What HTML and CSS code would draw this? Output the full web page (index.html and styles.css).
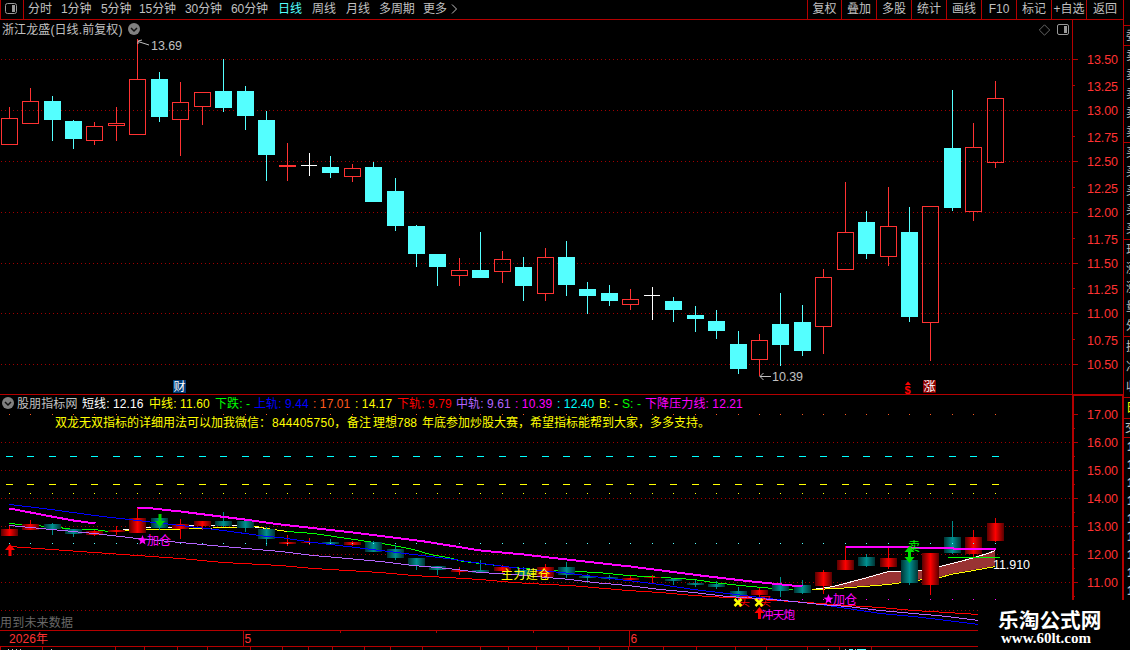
FILE: index.html
```html
<!DOCTYPE html>
<html lang="zh-CN">
<head>
<meta charset="utf-8">
<title>浙江龙盛 日线</title>
<link rel="stylesheet" href="styles.css">
</head>
<body>
<div class="terminal">
  <main class="workspace">
    <nav class="toolbar">
      <div class="panel-toggle"><svg width="15" height="14" viewBox="0 0 15 14"><rect x="1.5" y="1.5" width="11" height="10" rx="2" fill="none" stroke="#999"/><rect x="8" y="3" width="3" height="7" fill="#999"/></svg></div>
      <div class="periods">
        <span>分时</span><span>1分钟</span><span>5分钟</span><span>15分钟</span><span>30分钟</span><span>60分钟</span><span class="active">日线</span><span>周线</span><span>月线</span><span>多周期</span><span>更多</span><svg width="8" height="12" viewBox="0 0 8 12"><path d="M1 1.500L5.500 6L1 10.500" fill="none" stroke="#c0c0c0"/></svg>
      </div>
      <div class="tools"><span>复权</span><span>叠加</span><span>多股</span><span>统计</span><span>画线</span><span>F10</span><span>标记</span><span>+自选</span><span>返回</span></div>
    </nav>
    <section class="panel price-panel">
      <svg class="canvas" id="price" viewBox="0 20 1123 374"></svg>
      <header class="price-head">
        <span class="stock">浙江龙盛(日线.前复权)</span>
        <svg class="chev" width="12" height="12" viewBox="0 0 12 12"><circle cx="6" cy="6" r="6" fill="#808080"/><path d="M3 5L6 8L9 5" fill="none" stroke="#111" stroke-width="1.500"/></svg>
        <svg class="corner" width="31" height="12" viewBox="0 0 31 12"><path d="M5.500 .8L10.700 6L5.500 11.200L.3 6Z" fill="none" stroke="#808080" stroke-width=".8"/><rect x="18.500" y=".5" width="11" height="10" rx="1.500" fill="none" stroke="#999"/><rect x="25" y="2" width="3" height="7" fill="#999"/></svg>
      </header>
    </section>
    <section class="panel signal-panel">
      <svg class="canvas" id="signal" viewBox="0 394 1123 236"></svg>
      <div class="signal-head">
        <div class="values">
          <svg width="12" height="12" viewBox="0 0 12 12"><circle cx="6" cy="6" r="6" fill="#808080"/><path d="M3 5L6 8L9 5" fill="none" stroke="#111" stroke-width="1.500"/></svg>
          <span class="silver">股朋指标网</span><span class="white">短线: 12.16</span><span class="yellow">中线: 11.60</span><span class="green">下跌: -</span><span class="blue">上轨: 9.44</span><span class="orange">: 17.01</span><span class="yellow">: 14.17</span><span class="red">下轨: 9.79</span><span class="violet">中轨: 9.61</span><span class="magenta">: 10.39</span><span class="cyan">: 12.40</span><span class="yellow">B: -</span><span class="green">S: -</span><span class="magenta">下降压力线: 12.21</span>
        </div>
        <p class="notice"><span>双龙无双指标的详细用法可以加我微信：</span><span class="qq">844405750，</span><span>备注</span><span>理想788</span><span>年底参加炒股大赛，希望指标能帮到大家，多多支持。</span></p>
      </div>
    </section>
    <footer class="timeline"><svg id="dates" width="978" height="20" viewBox="0 630 978 20"></svg></footer>
  </main>
  <aside class="quotes">
    <div class="q q1"><i>委</i></div>
    <div class="q q5"><i>卖</i><i>卖</i><i>卖</i><i>卖</i><i>卖</i></div>
    <div class="q q5"><i>买</i><i>买</i><i>买</i><i>买</i><i>买</i></div>
    <div class="q q5"><i>现</i><i>涨</i><i>涨</i><i>量</i><i>外</i></div>
    <div class="q q3"><i>换</i><i>净</i><i>收</i></div>
    <div class="q qy"><i>日</i></div>
    <div class="q qt"><i>交</i></div>
    <div class="q ticks"><i>1</i><i>1</i><i>1</i><i>1</i><i>1</i><i>1</i><i>1</i><i>1</i><i>1</i></div>
  </aside>
  <div class="watermark"><strong>乐淘公式网</strong><b>www.60lt.com</b></div>
</div>
<script src="chart.js"></script>
</body>
</html>
```
FILE: styles.css
```css
* { box-sizing: border-box; }
body { margin: 0; background: #000; color: #c0c0c0; font-family: "Liberation Sans", "Noto Sans CJK SC", sans-serif; font-size: 12px; line-height: 14px; overflow: hidden; }
.terminal { position: relative; display: flex; width: 1130px; height: 650px; overflow: hidden; }
.workspace { display: grid; grid-template-rows: 20px 374px 236px 20px; width: 1123px; flex: none; }
.toolbar { display: flex; height: 20px; border-bottom: 1px solid #b40000; border-left: 1px solid #b40000; white-space: nowrap; }
.panel-toggle { width: 23px; padding: 2px 0 0 3px; border-right: 1px solid #b40000; }
.periods { display: grid; grid-template-columns: 33px 40px 38px 46px 46px 47px 34px 34px 33px 44px 28px 10px; padding: 2px 0 0 4px; letter-spacing: -.1px; }
.periods svg { margin-top: 1px; }
.active { color: #54ffff; }
.tools { display: grid; grid-template-columns: 34px repeat(7, 35px) 37px; margin-left: auto; }
.tools span { border-left: 1px solid #b40000; padding-top: 2px; text-align: center; }
.panel { display: grid; min-height: 0; }
.canvas, .price-head, .signal-head { grid-area: 1 / 1; }
.canvas { display: block; width: 1123px; height: 100%; }
.canvas text, .timeline text { font-family: "Liberation Sans", "Noto Sans CJK SC", sans-serif; }
.price-head { display: flex; align-self: start; padding: 3px 53px 0 2px; }
.stock { width: 126px; white-space: nowrap; letter-spacing: .1px; }
.corner { margin: 1px 0 0 auto; }
.signal-head { align-self: start; padding: 3px 0 0 2px; white-space: nowrap; }
.values { display: grid; grid-template-columns: 15px 65px 67px 66px 39px 59px 42px 42px 59px 59px 42px 42px 23px 23px 110px; letter-spacing: .1px; }
.silver { color: #c0c0c0; }
.white { color: #fff; }
.yellow { color: #ff0; }
.green { color: #0f0; }
.blue { color: #00f; }
.orange { color: #ff5a1e; }
.red { color: #f00; }
.violet { color: #b464ff; }
.magenta { color: #f0f; }
.cyan { color: #0ff; }
.notice { display: grid; grid-template-columns: 217px 75px 26px 49px 300px; margin: 5px 0 0 53px; color: #ff0; }
.qq { letter-spacing: .25px; }
.timeline svg { display: block; }
.quotes { width: 7px; height: 600px; padding-top: 25px; overflow: hidden; flex: none; border-left: 1px solid #b40000; }
.q { display: grid; border-top: 1px solid #b40000; overflow: hidden; padding-left: 2px; color: #c0c0c0; align-content: space-around; }
.q i { font-style: normal; width: 14px; height: 14px; }
.q1 { height: 20px; }
.q5 { height: 97px; }
.q3 { height: 61px; }
.qy { height: 21px; color: #ff0; }
.qt { height: 19px; padding-left: 1px; }
.ticks { height: 163px; padding-left: 3px; font-weight: bold; }
.watermark { position: absolute; left: 978px; top: 600px; width: 152px; height: 50px; background: #000; color: #fff; display: flex; flex-direction: column; white-space: nowrap; }
.watermark strong { padding: 8px 0 0 20px; font: bold 20.7px/22px "Noto Sans CJK SC", sans-serif; }
.watermark b { padding-left: 23px; font: bold 15px/16px "Liberation Serif", serif; }
```
FILE: chart.js
```js
const X = i => Math.round(9 + i * 21.435 - 0.25);
const rect = (x, y, w, h, fill, extra = '') => `<rect x="${x}" y="${y}" width="${w}" height="${h}" fill="${fill}" ${extra}/>`;
const line = (pts, color, w = 1) => `<polyline points="${pts}" fill="none" stroke="${color}" stroke-width="${w}" shape-rendering="crispEdges" transform="translate(.5 .5)"/>`;
const text = (x, y, s, color, len, size = 12) => `<text x="${x}" y="${y}" fill="${color}" font-size="${size}" ${len ? `textLength="${len}"` : ''}>${s}</text>`;
const dots = y => `<path d="M1 ${y + .5}H1072" stroke="#a00000" stroke-dasharray="1 3" shape-rendering="crispEdges"/>`;
const RED = '#ff3232', CYAN = '#54ffff', AXIS = '#b40000';

// kind, high, body top, body bottom, low (vertical canvas units)
const candles = [
  ['r',107,118,145,145],['r',88,101,124,124],['c',96,101,120,141],['c',120,121,139,149],['r',122,126,141,145],
  ['r',107,123,126,141],['r',39,79,135,135],['c',72,79,117,122],['r',82,102,120,156],['r',92,92,107,125],
  ['c',59,91,108,112],['c',86,91,116,130],['c',111,120,155,181],['r',143,165,167,181],['w',153,165,166,176],
  ['c',156,167,173,178],['r',164,168,177,182],['c',162,167,202,202],['c',178,191,226,231],['c',225,226,254,267],
  ['c',254,254,267,286],['r',258,270,276,286],['c',232,270,278,278],['r',251,259,272,283],['c',257,267,286,301],
  ['r',248,257,294,301],['c',241,257,285,296],['c',282,289,296,314],['c',285,293,301,306],['r',289,299,305,310],
  ['w',287,295,296,320],['c',297,301,310,322],['c',306,315,319,332],['c',310,321,331,339],['c',331,344,369,374],
  ['r',334,340,360,376],['c',293,324,345,366],['c',305,322,351,356],['r',269,277,327,354],['r',182,232,270,270],
  ['c',211,222,254,259],['r',187,226,257,266],['c',207,232,317,322],['r',206,206,323,361],['c',90,148,208,211],
  ['r',123,147,212,221],['r',81,98,163,168]
];

let p = '';
[59,110,161,212,263,313,364].forEach(y => p += dots(y));
candles.forEach(([k, h, t, b, l], i) => {
  const x = X(i);
  if (k === 'c') p += rect(x, h, 1, l - h, CYAN) + rect(x - 8, t, 17, b - t, CYAN);
  else if (k === 'w') p += rect(x, h, 1, l - h, '#fff') + rect(x - 8, t, 16, 1, '#fff');
  else {
    p += rect(x, h, 1, t - h, RED) + rect(x, b, 1, l - b, RED);
    p += b - t < 3 ? rect(x - 8, t, 17, b - t, RED) : `<rect x="${x - 7.5}" y="${t + .5}" width="16" height="${b - t - 1}" fill="none" stroke="${RED}"/>`;
  }
});
p += rect(1072, 20, 1, 374, AXIS);
const labels = [59,86,110,137,161,188,212,239,263,289,313,340,364];
labels.forEach((y, i) => {
  p += rect(1073, i % 2 ? y - 1 : y, i % 2 ? 2 : 5, 1, AXIS);
  p += text(1087, y + 5, (13.5 - i * .25).toFixed(2), RED, 31, 12.5);
});
p += `<path d="M138 44V41.500L149 45M138 41L142 40" fill="none" stroke="#c0c0c0"/>` + text(151, 50, '13.69', '#c0c0c0', 31, 12.5);
p += `<path d="M760 376.500H771M763.500 373L760 376.500L763.500 380" fill="none" stroke="#c0c0c0"/>` + text(772, 381, '10.39', '#c0c0c0', 31, 12.5);
p += rect(173, 380, 13, 13, '#003c78') + text(173.5, 391, '财', '#fff');
p += rect(923, 380, 13, 13, '#8c0000', 'rx="1"') + text(923.5, 391, '涨', '#fff');
p += `<path d="M905 385L908 381.500L911 385Z" fill="red"/><text x="904.500" y="393.500" fill="red" font-size="11" font-weight="bold">$</text>`;
document.getElementById('price').innerHTML = p;

const star = (x, y) => `<path transform="translate(${x} ${y})" fill="#f0f" d="M0-5L1.300-1.500L5-1.300L2.100 1L3 4.500L0 2.500L-3 4.500L-2.100 1L-5-1.300L-1.300-1.500Z"/>`;
const up = (x, y) => `<path transform="translate(${x} ${y})" fill="red" d="M0 0L5 6H1.500V12H-1.500V6H-5Z"/>`;
const sub = y => Math.round(526.5 + (y - 110.5) * 28 / 101.7);
const grad = (id, a, b) => `<linearGradient id="${id}"><stop offset="0" stop-color="${a}"/><stop offset=".5" stop-color="${b}"/><stop offset="1" stop-color="${a}"/></linearGradient>`;
let s = `<defs>${grad('gr', '#580000', '#ff0000')}${grad('gc', '#003434', '#009090')}</defs>`;
[442,470,498,526,554,582,610].forEach(y => s += dots(y));
const top1 = '812,589 833,586 867,577 888,571 902,571 922,570 940,566 967,559 987,553 995,550';
const low = ['812,589','837,588','863,586','888,584','902,582','923,579','940,577','950,574','973,570','995,566'];
s += `<polygon points="${top1} ${[...low].reverse().join(' ')}" fill="#993333"/>`;
s += line(top1, '#fff') + line(low.join(' '), '#ff0');
s += line('9,523 30,525 51,526 73,529 94,529 108,531', '#0f0');
s += line('122,529 137,529 147,527 169,527 190,525 244,525 266,528', '#fff');
s += line('124,530 137,530 148,529 172,529 190,528 235,527 256,526 266,528 287,531', '#ff0');
s += line('287,531 313,533 347,538 367,541 382,543 393,545 413,549 430,554 447,557 463,561 480,563 513,567 535,569 557,570 575,571 597,572 627,575 663,577 693,579 713,582 740,585 773,588 793,589', '#0f0');
candles.forEach(([k, h, t, b, l], i) => {
  const x = X(i), y = sub(t), c = k === 'c', wick = c ? '#008c8c' : '#f00000';
  s += rect(x, sub(h), 1, Math.max(1, sub(l) - sub(h)), wick) + rect(x - 8, y, 17, Math.max(k === 'w' ? 1 : 2, sub(b) - y), c ? 'url(#gc)' : 'url(#gr)');
});
s += line('9,504 51,509 94,515 137,520 180,525 223,530 266,536 280,537 313,542 347,546 380,550 413,554 447,558 467,561 497,565 520,568 540,570 570,573 593,576 627,580 660,584 693,589 727,593 760,597 793,601 820,604 847,608 880,613 913,616 947,620 978,624', '#00f');
s += line('9,546 51,549 94,552 137,555 180,558 223,562 280,565 313,568 347,570 380,572 413,575 447,577 480,579 513,582 547,584 570,585 593,587 627,590 660,592 693,595 727,597 747,598 773,600 793,601 847,605 880,607 913,610 947,612 978,614', '#f00');
s += line('9,525 51,529 94,533 137,538 180,542 223,546 280,551 313,555 347,558 380,561 413,565 447,568 480,572 513,574 547,577 570,579 593,582 627,585 660,589 693,592 727,596 760,598 793,601 820,604 847,606 880,610 913,613 947,616 978,620', '#b464ff');
s += line('9,508 51,516 73,520 95,523', '#f0f', 2) + line('137,507 152,508 180,511 244,519 280,524 352,532 424,541 480,550 523,554 566,559 630,566 700,575 751,581 802,586', '#f0f', 2);
s += line('845,546 888,546 909,547 952,547 953,548 995,548', '#f0f', 2) + line('947,557 999,557', '#0f0');
candles.forEach((_, i) => {
  const x = X(i);
  s += rect(x, 414, 1, 1, '#ff5a1e') + rect(x - 3, 456, 7, 1, '#0ff') + rect(x - 3, 484, 7, 1, '#ff0') + rect(x, 493, 1, 1, '#ff0') + rect(x, 543, 1, 1, '#54ffff');
  if (i > 33) s += rect(x, 599, 1, 1, '#f0f');
});
s += up(10, 544) + `<path fill="#00d200" d="M158.500 514H161.500V521H165L160 527L155 521H158.500Z"/>`;
s += star(142.5, 540) + text(147, 545, '加仓', '#f0f') + star(828.5, 599) + text(833, 604, '加仓', '#f0f');
s += text(501, 578.5, '主力建仓', '#ff0', 49);
s += text(738, 606, '买', '#f00') + text(759, 606, '买', '#f00');
[738, 759].forEach(x => s += `<path d="M${x - 3.5} 599L${x + 3.5} 606M${x + 3.5} 599L${x - 3.5} 606" stroke="#ff0" stroke-width="2.500"/>`);
s += up(759.5, 607) + text(762, 619, '冲天炮', '#f0f', 33, 11.5);
s += text(908, 551, '卖', '#0f0') + `<path fill="#0d0" d="M909.500 546L914.500 552H911V557H914.500L909.500 563L904.500 557H908V552H904.500Z"/>`;
s += text(993, 569, '11.910', '#fff', 37, 12.5) + text(0, 627, '用到未来数据', '#686868', 73);
s += rect(0, 394, 1123, 1, AXIS) + rect(1072, 394, 51, 2, AXIS) + rect(1072, 394, 2, 207, AXIS) + rect(1122, 394, 1, 207, AXIS);
for (let v = 17, y = 414; v > 10; v--, y += 28) s += rect(1074, y, 4, 1, AXIS) + rect(1074, y + 14, 1, 1, AXIS) + text(1087, y + 5, v + '.00', RED, 31, 12.5);
document.getElementById('signal').innerHTML = s;

let d = rect(0, 630, 978, 1, AXIS) + rect(0, 646, 978, 1, AXIS) + rect(243, 630, 1, 16, AXIS) + rect(629, 630, 1, 16, AXIS);
[340,436,533].forEach(x => d += rect(x, 631, 1, 2, AXIS));
[0,42,115,144,177,207,250,282,308,332,364,390,422,480,508,536,568,599,628,663,696,735,766,807,839,871].forEach(x => d += rect(x, 647, 1, 3, AXIS));
d += text(9, 643, '2026年', RED, 39) + text(244.5, 643, '5', RED) + text(630.5, 643, '6', RED);
[8,12,16,20,51,828,845,855].forEach(x => d += rect(x, 649, 1, 1, '#c0c0c0'));
d += rect(849, 649, 4, 1, '#54ffff') + rect(857, 649, 9, 1, '#54ffff');
document.getElementById('dates').innerHTML = d;
```
